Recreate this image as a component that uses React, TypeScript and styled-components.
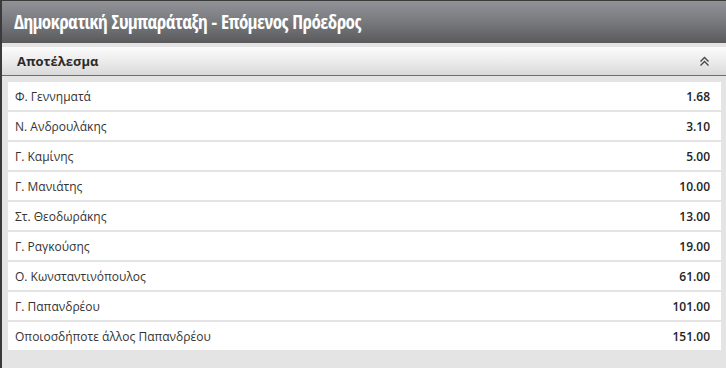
import React, { ReactElement } from "react";
import styled, { createGlobalStyle } from "styled-components";

interface Outcome {
  name: string;
  odds: string;
}

const outcomes: Outcome[] = [
  { name: "Φ. Γεννηματά", odds: "1.68" },
  { name: "Ν. Ανδρουλάκης", odds: "3.10" },
  { name: "Γ. Καμίνης", odds: "5.00" },
  { name: "Γ. Μανιάτης", odds: "10.00" },
  { name: "Στ. Θεοδωράκης", odds: "13.00" },
  { name: "Γ. Ραγκούσης", odds: "19.00" },
  { name: "Ο. Κωνσταντινόπουλος", odds: "61.00" },
  { name: "Γ. Παπανδρέου", odds: "101.00" },
  { name: "Οποιοσδήποτε άλλος Παπανδρέου", odds: "151.00" },
];

function App(): ReactElement {
  return (
    <>
      <GlobalStyle />
      <Panel>
        <Header>
          <Title>Δημοκρατική Συμπαράταξη - Επόμενος Πρόεδρος</Title>
        </Header>
        <Market>
          <MarketHeader>
            <MarketName>Αποτέλεσμα</MarketName>
            <Collapse width="11" height="11" viewBox="0 0 11 11">
              <path d="M1.5 5.5 L5.5 1.5 L9.5 5.5" />
              <path d="M1.5 9.5 L5.5 5.5 L9.5 9.5" />
            </Collapse>
          </MarketHeader>
          <List>
            {outcomes.map((o) => (
              <Row key={o.name}>
                <Name>{o.name}</Name>
                <Odds>{o.odds}</Odds>
              </Row>
            ))}
          </List>
        </Market>
      </Panel>
    </>
  );
}

export default App;

const GlobalStyle = createGlobalStyle`
  body {
    margin: 0;
    background: #e4e4e4;
    font-family: "Open Sans", "DejaVu Sans", sans-serif;
  }
`;

const Panel = styled.div`
  height: 367px;
  border-top: 1px solid #3a3a3a;
  border-left: 2px solid #3a3a3a;
  background: #e4e4e4;
  overflow: hidden;
`;

const Header = styled.div`
  height: 42px;
  display: flex;
  align-items: center;
  padding-left: 12px;
  background: linear-gradient(to bottom, #909298 0%, #7a7c80 45%, #5a5a5c 100%);
`;

const Title = styled.h1`
  margin: 0;
  font-family: "Open Sans Condensed", "DejaVu Sans Condensed",
    "Liberation Sans Narrow", "Open Sans", sans-serif;
  font-stretch: condensed;
  font-size: 19px;
  font-weight: 600;
  color: #ffffff;
  letter-spacing: -0.5px;
  white-space: nowrap;
`;

const Market = styled.div`
  margin-top: 4px;
`;

const MarketHeader = styled.div`
  height: 28px;
  display: flex;
  align-items: center;
  justify-content: space-between;
  padding: 0 16px 0 15px;
  background: linear-gradient(to bottom, #fbfbfb 0%, #ececec 50%, #d9d9d9 100%);
  border-bottom: 1px solid #6e6e6e;
`;

const MarketName = styled.span`
  font-size: 13px;
  font-weight: 700;
  color: #2b2b2b;
`;

const Collapse = styled.svg`
  fill: none;
  stroke: #444;
  stroke-width: 1.3;
`;

const List = styled.div`
  display: flex;
  flex-direction: column;
  gap: 2px;
  padding: 6px 5px 0 6px;
`;

const Row = styled.div`
  height: 28px;
  display: flex;
  align-items: center;
  justify-content: space-between;
  padding: 0 11px 0 7px;
  background: #ffffff;
`;

const Name = styled.span`
  font-size: 12px;
  color: #333333;
`;

const Odds = styled.span`
  font-size: 12px;
  font-weight: 600;
  color: #222222;
`;
